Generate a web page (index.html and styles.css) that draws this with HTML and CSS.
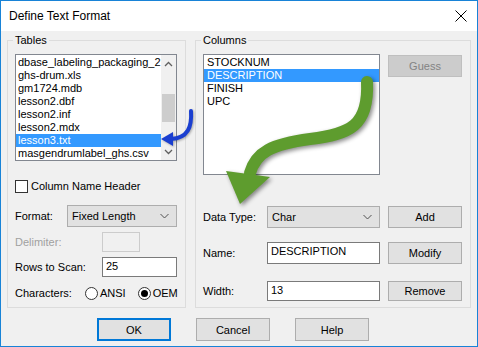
FILE: index.html
```html
<!DOCTYPE html>
<html>
	<head>
		<meta charset="UTF-8">
		<title>Define Text Format</title>
		<link rel="stylesheet" href="styles.css">
	</head>
	<body>
		<div class="window">
			<div class="titlebar">
				<span class="title">Define Text Format</span>
				<svg class="close" width="12" height="12" viewBox="0 0 12 12">
					<path d="M0.5 0.5 L11.5 11.5 M11.5 0.5 L0.5 11.5" stroke="#000" stroke-width="1" fill="none"/>
				</svg>
			</div>
			<div class="panels">
				<fieldset class="group tables">
					<legend>Tables</legend>
					<div class="listbox tables_list">
						<ul class="items">
							<li>dbase_labeling_packaging_2</li>
							<li>ghs-drum.xls</li>
							<li>gm1724.mdb</li>
							<li>lesson2.dbf</li>
							<li>lesson2.inf</li>
							<li>lesson2.mdx</li>
							<li class="sel">lesson3.txt</li>
							<li>masgendrumlabel_ghs.csv</li>
						</ul>
						<div class="scrollbar">
							<div class="sb_btn">
								<svg width="9" height="6" viewBox="0 0 9 6"><path d="M1 5 L4.5 1.5 L8 5" stroke="#606060" stroke-width="1.3" fill="none"/></svg>
							</div>
							<div class="sb_track"><div class="sb_thumb"></div></div>
							<div class="sb_btn">
								<svg width="9" height="6" viewBox="0 0 9 6"><path d="M1 1 L4.5 4.5 L8 1" stroke="#606060" stroke-width="1.3" fill="none"/></svg>
							</div>
						</div>
					</div>
					<div class="check_row">
						<span class="checkbox"></span>
						<span>Column Name Header</span>
					</div>
					<div class="row format_row">
						<span class="lbl lbl_format">Format:</span>
						<div class="combo combo_format">
							<span>Fixed Length</span>
							<svg width="9" height="6" viewBox="0 0 9 6"><path d="M0.5 1 L4.5 5 L8.5 1" stroke="#505050" stroke-width="1" fill="none"/></svg>
						</div>
					</div>
					<div class="row delim_row">
						<span class="lbl lbl_wide disabled">Delimiter:</span>
						<div class="edit edit_off"></div>
					</div>
					<div class="row scan_row">
						<span class="lbl lbl_wide">Rows to Scan:</span>
						<div class="edit edit_scan">25</div>
					</div>
					<div class="row chars_row">
						<span class="lbl lbl_chars">Characters:</span>
						<span class="radio"></span>
						<span class="radio_text">ANSI</span>
						<span class="radio on"></span>
						<span class="radio_text">OEM</span>
					</div>
				</fieldset>
				<fieldset class="group columns">
					<legend>Columns</legend>
					<div class="top_row">
						<div class="listbox columns_list">
							<ul class="items">
								<li>STOCKNUM</li>
								<li class="sel">DESCRIPTION</li>
								<li>FINISH</li>
								<li>UPC</li>
							</ul>
						</div>
						<div class="btn btn_off">Guess</div>
					</div>
					<div class="row type_row">
						<span class="lbl lbl_col">Data Type:</span>
						<div class="combo combo_type">
							<span>Char</span>
							<svg width="9" height="6" viewBox="0 0 9 6"><path d="M0.5 1 L4.5 5 L8.5 1" stroke="#505050" stroke-width="1" fill="none"/></svg>
						</div>
						<div class="btn side_btn">Add</div>
					</div>
					<div class="row name_row">
						<span class="lbl lbl_col">Name:</span>
						<div class="edit edit_col">DESCRIPTION</div>
						<div class="btn side_btn">Modify</div>
					</div>
					<div class="row width_row">
						<span class="lbl lbl_col">Width:</span>
						<div class="edit edit_col">13</div>
						<div class="btn side_btn">Remove</div>
					</div>
				</fieldset>
			</div>
			<div class="buttons">
				<div class="btn btn_default">OK</div>
				<div class="btn">Cancel</div>
				<div class="btn">Help</div>
			</div>
			<!-- callout arrows drawn over the dialog -->
			<svg class="arrows" width="478" height="347" viewBox="0 0 478 347">
				<g class="blue_arrow">
					<path d="M191 111 C192 127, 188 138, 171 139" stroke="#1b3fd0" stroke-width="4" stroke-linecap="round" fill="none"/>
					<polygon points="161,139 173,132 173,146" fill="#1b3fd0"/>
				</g>
				<g class="green_arrow">
					<path d="M367 82 C369 126, 350 134, 310 139 C272 144, 256 152, 250 173" stroke="#5e9c2e" stroke-width="12" stroke-linecap="round" fill="none"/>
					<polygon points="226,171 270,177 240,204" fill="#5e9c2e"/>
				</g>
			</svg>
		</div>
	</body>
</html>
```
FILE: styles.css
```css
*{
	padding: 0;
	margin: 0;
	box-sizing: border-box;
}
body{
	font-family: "Liberation Sans", Arial, sans-serif;
	font-size: 11px;
	color: #000;
	background: #f0f0f0;
}
.window{
	position: relative;
	width: 478px;
	height: 347px;
	border: 1px solid #1883d7;
	background: #f0f0f0;
}
.titlebar{
	height: 30px;
	background: #fff;
	display: flex;
	align-items: center;
	justify-content: space-between;
	padding: 0 10px 0 8px;
	font-size: 12px;
}
.panels{
	display: flex;
	gap: 9px;
	padding: 2px 0 0 6px;
}
.group{
	min-width: 0;
	height: 275px;
	border: 1px solid #dcdcdc;
	padding: 7px 7px 0;
}
.group>legend{
	padding: 0 2px;
	margin-left: -2px;
	line-height: 14px;
}
.tables{
	width: 179px;
}
.columns{
	width: 276px;
}
.listbox{
	display: flex;
	background: #fff;
	border: 1px solid #828790;
}
.items{
	flex: 1;
	list-style: none;
	padding-top: 1px;
}
.items>li{
	height: 13px;
	line-height: 13px;
	padding-left: 2px;
	white-space: nowrap;
	overflow: hidden;
}
.items>li.sel{
	background: #3399ff;
	color: #fff;
}
.tables_list{
	width: 162px;
	height: 107px;
}
.scrollbar{
	width: 17px;
	display: flex;
	flex-direction: column;
	background: #f0f0f0;
}
.sb_btn{
	height: 17px;
	display: flex;
	align-items: center;
	justify-content: center;
}
.sb_track{
	flex: 1;
	padding: 22px 1px 0;
}
.sb_thumb{
	height: 28px;
	background: #cdcdcd;
}
.check_row{
	display: flex;
	align-items: center;
	gap: 3px;
	height: 14px;
	margin-top: 18px;
}
.checkbox{
	flex: none;
	width: 13px;
	height: 13px;
	border: 1px solid #333;
	background: #fff;
}
.row{
	display: flex;
	align-items: center;
}
.lbl{
	flex: none;
}
.lbl_format{
	width: 52px;
}
.lbl_wide{
	width: 87px;
}
.lbl_chars{
	width: 70px;
}
.lbl_col{
	width: 64px;
}
.disabled{
	color: #a0a0a0;
}
.format_row{
	height: 22px;
	margin-top: 12px;
}
.delim_row,
.scan_row{
	height: 20px;
	margin-top: 5px;
}
.chars_row{
	height: 14px;
	margin-top: 9px;
}
.combo{
	height: 100%;
	display: flex;
	align-items: center;
	justify-content: space-between;
	padding: 0 7px 0 4px;
	background: #e1e1e1;
	border: 1px solid #adadad;
}
.combo_format{
	width: 110px;
}
.combo_type{
	width: 113px;
}
.edit{
	height: 100%;
	line-height: 16px;
	padding-left: 3px;
	background: #fff;
	border: 1px solid #7a7a7a;
}
.edit_off{
	width: 38px;
	background: #f0f0f0;
	border-color: #cccccc;
}
.edit_scan{
	width: 75px;
}
.edit_col{
	width: 113px;
}
.radio{
	flex: none;
	width: 13px;
	height: 13px;
	border: 1px solid #333;
	border-radius: 50%;
	background: #fff;
	display: flex;
	align-items: center;
	justify-content: center;
}
.radio.on::after{
	content: "";
	width: 7px;
	height: 7px;
	border-radius: 50%;
	background: #000;
}
.radio_text{
	margin-left: 2px;
	margin-right: 12px;
}
.top_row{
	display: flex;
	align-items: flex-start;
	gap: 8px;
}
.columns_list{
	width: 177px;
	height: 121px;
}
.columns_list .items>li{
	padding-left: 3px;
}
.btn{
	width: 74px;
	display: flex;
	align-items: center;
	justify-content: center;
	background: #e1e1e1;
	border: 1px solid #adadad;
}
.btn_off{
	height: 22px;
	margin-top: 1px;
	color: #838383;
	background: #cccccc;
	border-color: #bfbfbf;
}
.side_btn{
	height: 100%;
	margin-left: 8px;
}
.type_row{
	height: 22px;
	margin-top: 31px;
}
.name_row{
	height: 22px;
	margin-top: 14px;
}
.width_row{
	height: 20px;
	margin-top: 17px;
}
.buttons{
	display: flex;
	gap: 25px;
	padding: 10px 0 0 96px;
}
.buttons>.btn{
	height: 23px;
}
.btn_default{
	border: 2px solid #0078d7;
}
.arrows{
	position: absolute;
	top: -1px;
	left: -1px;
	pointer-events: none;
}
.green_arrow{
	filter: drop-shadow(2px 2px 2px rgba(0, 0, 0, 0.45));
}
.blue_arrow{
	filter: drop-shadow(1px 1px 1px rgba(0, 0, 0, 0.3));
}
```
